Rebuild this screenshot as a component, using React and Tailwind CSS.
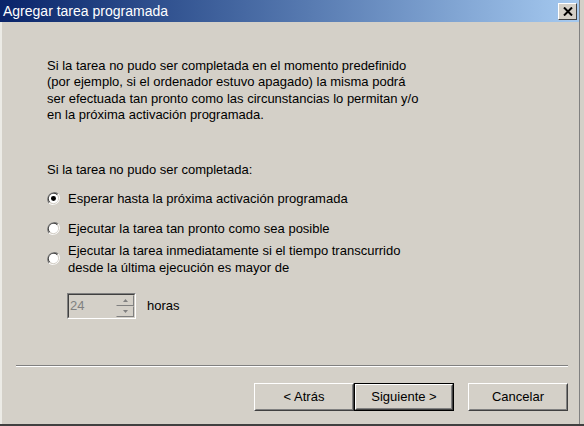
const font = { fontFamily: '"Liberation Sans", Arial, sans-serif' };

function Radio({ checked }) {
    return (
        <svg width="13" height="13" viewBox="0 0 12 12" className="shrink-0">
            <path d="M10.2 1.8 A6 6 0 0 0 1.8 10.2" fill="none" stroke="#808080" strokeWidth="1" />
            <path d="M9.5 2.5 A5 5 0 0 0 2.5 9.5" fill="none" stroke="#404040" strokeWidth="1" />
            <path d="M1.8 10.2 A6 6 0 0 0 10.2 1.8" fill="none" stroke="#ffffff" strokeWidth="1" />
            <path d="M2.5 9.5 A5 5 0 0 0 9.5 2.5" fill="none" stroke="#d4d0c8" strokeWidth="1" />
            <circle cx="6" cy="6" r="4.3" fill="#ffffff" />
            {checked && <circle cx="6" cy="6" r="2.3" fill="#000000" />}
        </svg>
    );
}

function Button({ children, isDefault }) {
    return (
        <div className={'w-[100px] h-[28px] ' + (isDefault ? 'border border-black' : '')}>
            <div className="w-full h-full border border-t-white border-l-white border-r-[#404040] border-b-[#404040]">
                <div className="w-full h-full flex items-center justify-center border border-t-[#d4d0c8] border-l-[#d4d0c8] border-r-[#808080] border-b-[#808080] text-[13px] text-black">
                    {children}
                </div>
            </div>
        </div>
    );
}

function RadioRow({ checked, children, className }) {
    return (
        <div className={'flex items-center gap-[8px] ' + className}>
            <Radio checked={checked} />
            <div className="leading-[17px]">{children}</div>
        </div>
    );
}

export default function App() {
    return (
        <div style={font} className="w-[584px] h-[426px] bg-[#d4d0c8] flex flex-col border-b-2 border-b-[#404040] overflow-hidden text-[13px] text-black">
            <div className="flex flex-1 min-h-0">
                <div className="flex-1 flex flex-col border-r border-r-[#808080] min-w-0">
                    <div className="h-[22px] flex items-center justify-between pl-[3px] pr-[2px] bg-gradient-to-r from-[#0a246a] to-[#a6caf0]">
                        <span className="text-white text-[14px] leading-none">Agregar tarea programada</span>
                        <div className="w-[19px] h-[17px] bg-[#d4d0c8] border border-t-white border-l-white border-r-[#404040] border-b-[#404040] flex items-center justify-center">
                            <svg width="10" height="9" viewBox="0 0 10 9">
                                <path d="M1 0.5 L9 8.5 M9 0.5 L1 8.5" stroke="#000" strokeWidth="2" />
                            </svg>
                        </div>
                    </div>
                    <div className="flex-1 flex flex-col border-l-2 border-l-[#ecebe6]">
                        <div className="pl-[45px] pt-[36px]">
                            <p className="leading-[16.4px]">
                                Si la tarea no pudo ser completada en el momento predefinido<br />
                                (por ejemplo, si el ordenador estuvo apagado) la misma podrá<br />
                                ser efectuada tan pronto como las circunstancias lo permitan y/o<br />
                                en la próxima activación programada.
                            </p>
                            <p className="mt-[38px] leading-[16px]">Si la tarea no pudo ser completada:</p>
                            <RadioRow checked className="mt-[12px]">Esperar hasta la próxima activación programada</RadioRow>
                            <RadioRow className="mt-[13px]">Ejecutar la tarea tan pronto como sea posible</RadioRow>
                            <RadioRow className="mt-[5px]">
                                Ejecutar la tarea inmediatamente si el tiempo transcurrido<br />
                                desde la última ejecución es mayor de
                            </RadioRow>
                            <div className="flex items-center mt-[17px] ml-[20px]">
                                <div className="w-[69px] h-[26px] border border-t-[#808080] border-l-[#808080] border-r-white border-b-white">
                                    <div className="w-full h-full border border-t-[#404040] border-l-[#404040] border-r-[#d4d0c8] border-b-[#d4d0c8] flex">
                                        <div className="flex-1 text-[#808080] pl-[1px] leading-[22px]">24</div>
                                        <div className="w-[18px] flex flex-col">
                                            <div className="flex-1 border border-t-[#d4d0c8] border-l-[#d4d0c8] border-r-[#808080] border-b-[#808080] flex items-center justify-center">
                                                <svg width="5" height="3" viewBox="0 0 5 3"><path d="M0 3 L2.5 0 L5 3 Z" fill="#808080" /></svg>
                                            </div>
                                            <div className="flex-1 border border-t-[#d4d0c8] border-l-[#d4d0c8] border-r-[#808080] border-b-[#808080] flex items-center justify-center">
                                                <svg width="5" height="3" viewBox="0 0 5 3"><path d="M0 0 L2.5 3 L5 0 Z" fill="#808080" /></svg>
                                            </div>
                                        </div>
                                    </div>
                                </div>
                                <span className="ml-[11px]">horas</span>
                            </div>
                        </div>
                        <div className="mt-auto pb-[13px]">
                            <div className="ml-[14px] mr-[11px] border-t border-t-[#808080] border-b border-b-white" />
                            <div className="flex justify-end mt-[16px] mr-[11px]">
                                <Button>&lt; Atrás</Button>
                                <Button isDefault>Siguiente &gt;</Button>
                                <div className="w-[14px]" />
                                <Button>Cancelar</Button>
                            </div>
                        </div>
                    </div>
                </div>
                <div className="w-[4px] bg-[#d4d0c8]" />
            </div>
        </div>
    );
}
